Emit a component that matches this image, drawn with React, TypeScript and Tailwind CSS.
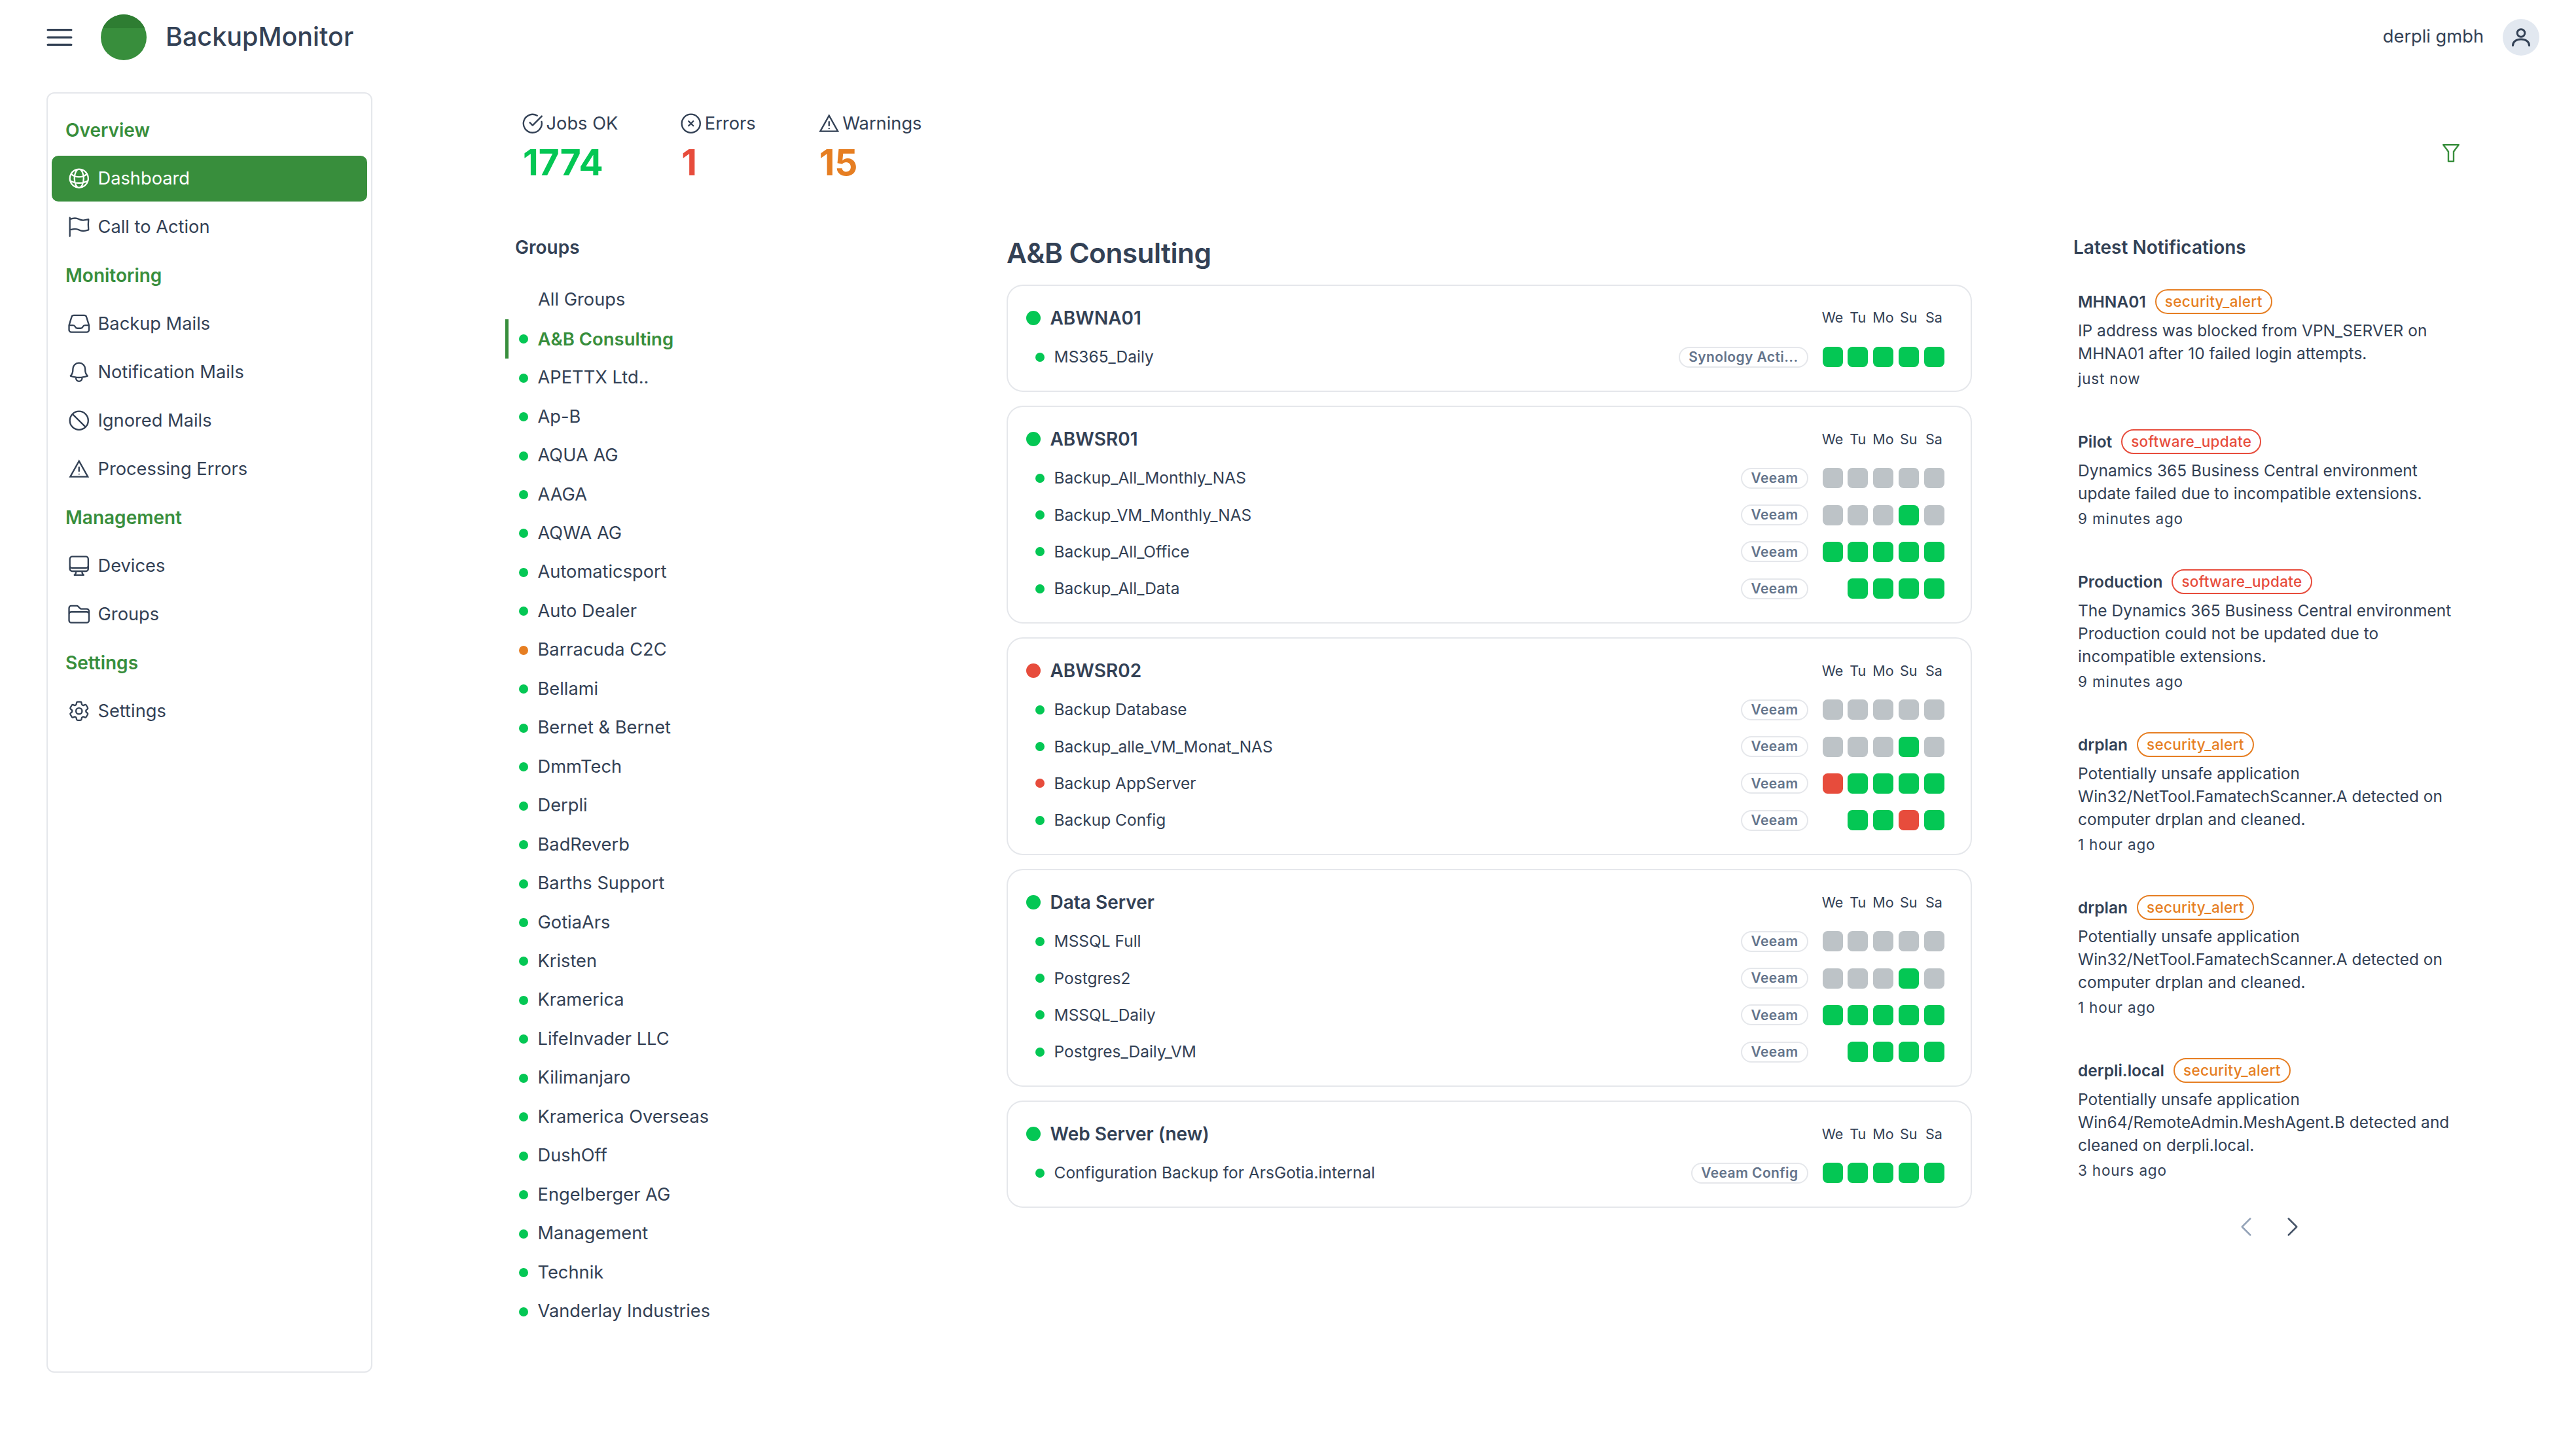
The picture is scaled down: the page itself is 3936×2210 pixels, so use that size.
import React from "react";
import { CircleCheckBig } from "lucide-react";
import {
  HiOutlineBars3,
  HiOutlineBell,
  HiOutlineChevronLeft,
  HiOutlineChevronRight,
  HiOutlineCog6Tooth,
  HiOutlineComputerDesktop,
  HiOutlineFlag,
  HiOutlineFolder,
  HiOutlineGlobeAlt,
  HiOutlineInbox,
  HiOutlineNoSymbol,
  HiOutlineXCircle,
} from "react-icons/hi2";

// sharp cornered warning sign, the outline sets don't have this one
function WarningIcon({ className }: { className?: string }) {
  return (
    <svg viewBox="0 0 24 24" fill="none" stroke="currentColor" strokeWidth="1.5" className={className}>
      <path d="M12 4.2 20.6 19.6H3.4Z" />
      <path d="M12 9.8v4.8" />
      <path d="M12 16.6v.8" />
    </svg>
  );
}

const nav = [
  { label: "Overview" },
  { label: "Dashboard", icon: HiOutlineGlobeAlt, active: true },
  { label: "Call to Action", icon: HiOutlineFlag },
  { label: "Monitoring" },
  { label: "Backup Mails", icon: HiOutlineInbox },
  { label: "Notification Mails", icon: HiOutlineBell },
  { label: "Ignored Mails", icon: HiOutlineNoSymbol },
  { label: "Processing Errors", icon: WarningIcon },
  { label: "Management" },
  { label: "Devices", icon: HiOutlineComputerDesktop },
  { label: "Groups", icon: HiOutlineFolder },
  { label: "Settings" },
  { label: "Settings", icon: HiOutlineCog6Tooth },
];

const groups = [
  "A&B Consulting",
  "APETTX Ltd..",
  "Ap-B",
  "AQUA AG",
  "AAGA",
  "AQWA AG",
  "Automaticsport",
  "Auto Dealer",
  "Barracuda C2C",
  "Bellami",
  "Bernet & Bernet",
  "DmmTech",
  "Derpli",
  "BadReverb",
  "Barths Support",
  "GotiaArs",
  "Kristen",
  "Kramerica",
  "LifeInvader LLC",
  "Kilimanjaro",
  "Kramerica Overseas",
  "DushOff",
  "Engelberger AG",
  "Management",
  "Technik",
  "Vanderlay Industries",
];

const devices = [
  {
    name: "ABWNA01",
    jobs: [{ name: "MS365_Daily", type: "Synology Acti...", days: "ggggg" }],
  },
  {
    name: "ABWSR01",
    jobs: [
      { name: "Backup_All_Monthly_NAS", type: "Veeam", days: "xxxxx" },
      { name: "Backup_VM_Monthly_NAS", type: "Veeam", days: "xxxgx" },
      { name: "Backup_All_Office", type: "Veeam", days: "ggggg" },
      { name: "Backup_All_Data", type: "Veeam", days: "_gggg" },
    ],
  },
  {
    name: "ABWSR02",
    failed: true,
    jobs: [
      { name: "Backup Database", type: "Veeam", days: "xxxxx" },
      { name: "Backup_alle_VM_Monat_NAS", type: "Veeam", days: "xxxgx" },
      { name: "Backup AppServer", type: "Veeam", days: "rgggg", failed: true },
      { name: "Backup Config", type: "Veeam", days: "_ggrg" },
    ],
  },
  {
    name: "Data Server",
    jobs: [
      { name: "MSSQL Full", type: "Veeam", days: "xxxxx" },
      { name: "Postgres2", type: "Veeam", days: "xxxgx" },
      { name: "MSSQL_Daily", type: "Veeam", days: "ggggg" },
      { name: "Postgres_Daily_VM", type: "Veeam", days: "_gggg" },
    ],
  },
  {
    name: "Web Server (new)",
    jobs: [{ name: "Configuration Backup for ArsGotia.internal", type: "Veeam Config", days: "ggggg" }],
  },
];

const notifications = [
  {
    host: "MHNA01",
    kind: "security_alert",
    text: "IP address was blocked from VPN_SERVER on MHNA01 after 10 failed login attempts.",
    time: "just now",
  },
  {
    host: "Pilot",
    kind: "software_update",
    text: "Dynamics 365 Business Central environment update failed due to incompatible extensions.",
    time: "9 minutes ago",
  },
  {
    host: "Production",
    kind: "software_update",
    text: "The Dynamics 365 Business Central environment Production could not be updated due to incompatible extensions.",
    time: "9 minutes ago",
  },
  {
    host: "drplan",
    kind: "security_alert",
    text: "Potentially unsafe application Win32/NetTool.FamatechScanner.A detected on computer drplan and cleaned.",
    time: "1 hour ago",
  },
  {
    host: "drplan",
    kind: "security_alert",
    text: "Potentially unsafe application Win32/NetTool.FamatechScanner.A detected on computer drplan and cleaned.",
    time: "1 hour ago",
  },
  {
    host: "derpli.local",
    kind: "security_alert",
    text: "Potentially unsafe application Win64/RemoteAdmin.MeshAgent.B detected and cleaned on derpli.local.",
    time: "3 hours ago",
  },
];

const dayColor: Record<string, string> = {
  g: "bg-[#04c754]",
  x: "bg-[#bdc3c7]",
  r: "bg-[#e74c3c]",
  _: "bg-transparent",
};

function Sidebar() {
  return (
    <aside className="flex h-[1957px] w-[498px] flex-col gap-[4px] rounded-[12px] border-[2.5px] border-[#e5e7eb] px-[6px] pt-[21px]">
      {nav.map((item) => {
        const Icon = item.icon;
        if (!Icon) {
          return (
            <div key={item.label + "-head"} className="flex h-[70px] items-center pl-[21px] text-[28px] font-semibold text-[#388e3c]">
              {item.label}
            </div>
          );
        }
        return (
          <div
            key={item.label}
            className={
              item.active
                ? "flex h-[70px] items-center gap-[10px] rounded-[10px] bg-[#388e3c] pl-[23px] text-[27.25px] text-white"
                : "flex h-[70px] items-center gap-[10px] pl-[23px] text-[27.25px]"
            }
          >
            <Icon className="size-[37.5px]" />
            {item.label}
          </div>
        );
      })}
    </aside>
  );
}

function Stat({ icon, label, value, color }: { icon: React.ReactNode; label: string; value: string; color: string }) {
  return (
    <div>
      <div className="flex h-[38px] items-center gap-[2px] text-[27.25px]">
        <span className="flex size-[37.5px] items-center justify-center">{icon}</span>
        {label}
      </div>
      <div className={`mt-[13px] pl-[4px] text-[55px] leading-[55px] font-bold ${color}`}>{value}</div>
    </div>
  );
}

function Groups() {
  return (
    <div className="w-[766px] shrink-0">
      <h2 className="flex h-[36px] items-center pl-[15px] text-[28px] font-semibold">Groups</h2>
      <div className="mt-[33px] flex flex-col">
        <div className="flex h-[59.46px] items-center pl-[50px] text-[27.25px]">All Groups</div>
        {groups.map((g, i) => (
          <div
            key={g}
            className={
              i === 0
                ? "flex h-[59.46px] items-center gap-[15px] border-l-[5.5px] border-[#388e3c] pl-[15.5px] text-[27.5px] font-semibold text-[#388e3c]"
                : "flex h-[59.46px] items-center gap-[15px] border-l-[5.5px] border-transparent pl-[15.5px] text-[27.25px]"
            }
          >
            <span className={g === "Barracuda C2C" ? "size-[14px] rounded-full bg-[#e67e22]" : "size-[14px] rounded-full bg-[#04c754]"} />
            {g}
          </div>
        ))}
      </div>
    </div>
  );
}

function DayHeader() {
  return (
    <div className="flex gap-[7.75px] text-[21.5px]">
      {["We", "Tu", "Mo", "Su", "Sa"].map((d) => (
        <span key={d} className="flex w-[31px] justify-center">
          {d}
        </span>
      ))}
    </div>
  );
}

function DeviceCard({ device }: { device: (typeof devices)[number] }) {
  return (
    <div className="rounded-[25px] border-[2.5px] border-[#e5e7eb] pt-[33.5px] pr-[40.5px] pb-[35px] pl-[27.5px]">
      <div className="flex h-[30px] items-center">
        <span className={device.failed ? "size-[22px] rounded-full bg-[#e74c3c]" : "size-[22px] rounded-full bg-[#04c754]"} />
        <span className="ml-[15px] flex-1 text-[28px] font-semibold">{device.name}</span>
        <DayHeader />
      </div>
      <div className="mt-[29px] flex flex-col gap-[24.25px]">
        {device.jobs.map((job) => (
          <div key={job.name} className="flex h-[32px] items-center pl-[14px]">
            <span className={job.failed ? "size-[14px] rounded-full bg-[#e74c3c]" : "size-[14px] rounded-full bg-[#04c754]"} />
            <span className="ml-[15px] flex-1 text-[24.5px]">{job.name}</span>
            <span className="flex h-[32px] items-center rounded-full border-[2.5px] border-[#e5e7eb] px-[13px] text-[21px] font-semibold tracking-[0.4px] text-[#64748b]">
              {job.type}
            </span>
            <div className="ml-[22px] flex gap-[7.75px]">
              {job.days.split("").map((d, i) => (
                <span key={i} className={`size-[31px] rounded-[7.5px] ${dayColor[d]}`} />
              ))}
            </div>
          </div>
        ))}
      </div>
    </div>
  );
}

function Notifications() {
  return (
    <div className="ml-[155px] w-[620px]">
      <h2 className="flex h-[36px] items-center text-[28px] font-semibold">Latest Notifications</h2>
      <div className="mt-[46px] flex flex-col gap-[62px] pl-[7px]">
        {notifications.map((n, i) => (
          <div key={i} className="w-[590px]">
            <div className="flex h-[38px] items-center gap-[14px]">
              <span className="text-[24.5px] font-semibold">{n.host}</span>
              <span
                className={
                  n.kind === "security_alert"
                    ? "flex h-[38px] items-center rounded-full border-[2.5px] border-[#e67e22] px-[13px] text-[22.5px] font-medium tracking-[0.3px] text-[#e67e22]"
                    : "flex h-[38px] items-center rounded-full border-[2.5px] border-[#e74c3c] px-[13px] text-[22.5px] font-medium tracking-[0.3px] text-[#e74c3c]"
                }
              >
                {n.kind}
              </span>
            </div>
            <p className="mt-[7.5px] text-[24.5px] leading-[35px]">{n.text}</p>
            <div className="mt-[6.5px] text-[22.5px] leading-[30px] tracking-[0.8px]">{n.time}</div>
          </div>
        ))}
      </div>
      <div className="mt-[51px] flex w-[584px] justify-center gap-[31px] pl-[15px]">
        <HiOutlineChevronLeft className="size-[40px] text-[#94a3b8]" />
        <HiOutlineChevronRight className="size-[40px] text-[#475569]" />
      </div>
    </div>
  );
}

export default function App() {
  return (
    <div className="h-[2210px] w-[3936px] overflow-hidden bg-white font-['Inter',sans-serif] text-[#334155]">
      <header className="flex h-[113px] items-center justify-between pr-[56px] pl-[65px]">
        <div className="flex items-center">
          <HiOutlineBars3 className="size-[52px]" />
          <div className="ml-[37px] size-[70px] overflow-hidden rounded-full bg-[#388e3c]">
            <div className="h-[21px] bg-[#2e7d32]" />
          </div>
          <span className="ml-[29px] text-[39.5px] font-medium">BackupMonitor</span>
        </div>
        <div className="flex items-center gap-[29px]">
          <span className="text-[27.25px]">derpli gmbh</span>
          <div className="flex size-[56px] items-center justify-center rounded-full bg-[#e2e8f0]">
            <svg viewBox="0 0 28 28" className="size-[28px] fill-none stroke-current stroke-[3]" strokeLinecap="round">
              <circle cx="14" cy="7.5" r="5.8" />
              <path d="M1.5 26.5c0-6 5.5-9.5 12.5-9.5s12.5 3.5 12.5 9.5" />
            </svg>
          </div>
        </div>
      </header>
      <div className="mt-[28px] flex pl-[71px]">
        <Sidebar />
        <main className="flex-1">
          <div className="flex items-start justify-between pt-[29px] pr-[178px] pl-[226px]">
            <div className="flex gap-[93px]">
              <Stat icon={<CircleCheckBig size={33.6} strokeWidth={1.67} />} label="Jobs OK" value="1774" color="text-[#04c754]" />
              <Stat icon={<HiOutlineXCircle className="size-[37.5px]" />} label="Errors" value="1" color="text-[#e74c3c]" />
              <Stat icon={<WarningIcon className="size-[37.5px]" />} label="Warnings" value="15" color="text-[#e67e22]" />
            </div>
            <svg viewBox="0 0 26 28" className="mt-[50px] h-[28px] w-[26px] fill-none stroke-[#388e3c] stroke-[2.4]">
              <path d="M1.2 1.2h23.6l-7.8 10.6v15h-8v-15z" strokeLinejoin="round" />
            </svg>
          </div>
          <div className="mt-[84px] flex pl-[203px]">
            <Groups />
            <div className="w-[1475px] shrink-0">
              <h1 className="flex h-[54px] items-center text-[42.5px] font-semibold tracking-[-0.6px]">A&amp;B Consulting</h1>
              <div className="mt-[21px] flex flex-col gap-[21.75px]">
                {devices.map((d) => (
                  <DeviceCard key={d.name} device={d} />
                ))}
              </div>
            </div>
            <Notifications />
          </div>
        </main>
      </div>
    </div>
  );
}
